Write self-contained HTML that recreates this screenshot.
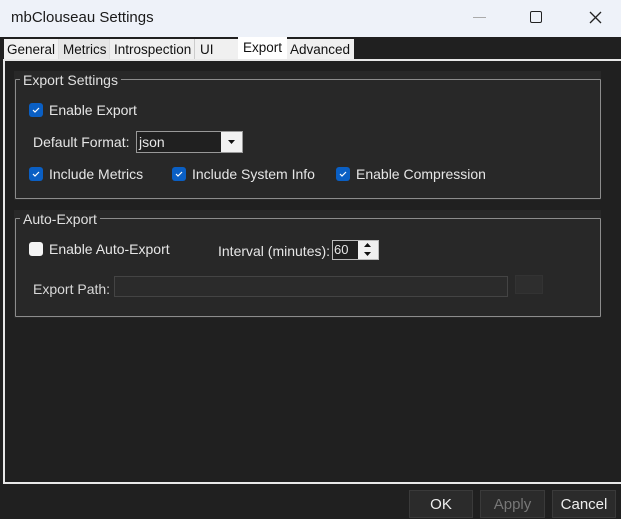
<!DOCTYPE html>
<html><head><style>
*{margin:0;padding:0;box-sizing:border-box}
body{width:621px;height:518px;background:#202020;font-family:"Liberation Sans",sans-serif;font-size:14px;color:#e6e6e6;position:relative;overflow:hidden}
.a{position:absolute}
.t{white-space:nowrap}
.cb{position:absolute;width:14px;height:14px;background:#0a5fc4;border-radius:3px}
.cb svg{position:absolute;left:2px;top:2px}
.gb{position:absolute;border:1px solid #8c8c8c;border-radius:1px}
.leg{position:absolute;background:#282828;padding:0 3px;color:#e0e0e0}
.btn{position:absolute;top:490px;height:28px;background:#2b2b2b;border:1px solid #3a3a3a;text-align:center;line-height:28px;font-size:15px}
</style></head><body>
<div class="a" style="left:0;top:0;width:621px;height:37px;background:#eef2f9"></div>
<div class="a t" style="left:11px;top:9px;color:#1a1a1a;font-size:15px">mbClouseau Settings</div>
<div class="a" style="left:473px;top:17px;width:13px;height:1px;background:#aaa"></div>
<div class="a" style="left:530px;top:11px;width:12px;height:12px;border:1.5px solid #222;border-radius:2px"></div>
<svg class="a" style="left:589px;top:11px" width="13" height="13"><path d="M1 1L12 12M12 1L1 12" stroke="#222" stroke-width="1.3"/></svg>
<!-- tabs -->
<div class="a" style="left:4px;top:39px;width:350px;height:20px;background:#f0f0f0"></div>
<div class="a t" style="left:7px;top:42px;color:#111;font-size:13.5px">General</div>
<div class="a" style="left:58px;top:39px;width:52px;height:20px;background:#e6e6e6;border-left:1px solid #ddd;border-right:1px solid #ddd"></div>
<div class="a t" style="left:63px;top:42px;color:#111;font-size:13.5px">Metrics</div>
<div class="a t" style="left:114px;top:42px;color:#111;font-size:13.5px">Introspection</div>
<div class="a" style="left:194px;top:39px;width:1px;height:20px;background:#ccc"></div>
<div class="a t" style="left:200px;top:42px;color:#111;font-size:13.5px">UI</div>
<div class="a" style="left:238px;top:37px;width:49px;height:24px;background:#fff"></div>
<div class="a t" style="left:243px;top:40px;color:#111;font-size:13.5px">Export</div>
<div class="a t" style="left:290px;top:42px;color:#111;font-size:13.5px">Advanced</div>
<!-- panel border -->
<div class="a" style="left:3px;top:59px;width:620px;height:425px;border:2px solid #e8e8e8;border-right:none"></div>
<div class="a" style="left:5px;top:61px;width:616px;height:421px;background:#202020"></div>
<!-- group 1 -->
<div class="a" style="left:14px;top:71px;width:587px;height:129px;background:#282828"></div>
<div class="gb" style="left:15px;top:79px;width:586px;height:120px"></div>
<div class="leg t" style="left:20px;top:72px">Export Settings</div>
<div class="cb" style="left:29px;top:103px"><svg width="10" height="10"><path d="M2 5L4 7L8 3" stroke="#fff" stroke-width="1.2" fill="none"/></svg></div>
<div class="a t" style="left:49px;top:102px">Enable Export</div>
<div class="a t" style="left:33px;top:134px">Default Format:</div>
<div class="a" style="left:136px;top:131px;width:107px;height:22px;background:#f2f2f2;border:1px solid #999"></div>
<div class="a" style="left:137px;top:132px;width:84px;height:20px;background:#202020"></div>
<div class="a t" style="left:139px;top:134px">json</div>
<svg class="a" style="left:228px;top:140px" width="7" height="5"><path d="M0 0H7L3.5 4Z" fill="#111"/></svg>
<div class="cb" style="left:29px;top:167px"><svg width="10" height="10"><path d="M2 5L4 7L8 3" stroke="#fff" stroke-width="1.2" fill="none"/></svg></div>
<div class="a t" style="left:49px;top:166px">Include Metrics</div>
<div class="cb" style="left:172px;top:167px"><svg width="10" height="10"><path d="M2 5L4 7L8 3" stroke="#fff" stroke-width="1.2" fill="none"/></svg></div>
<div class="a t" style="left:192px;top:166px">Include System Info</div>
<div class="cb" style="left:336px;top:167px"><svg width="10" height="10"><path d="M2 5L4 7L8 3" stroke="#fff" stroke-width="1.2" fill="none"/></svg></div>
<div class="a t" style="left:356px;top:166px">Enable Compression</div>
<!-- group 2 -->
<div class="a" style="left:14px;top:210px;width:587px;height:108px;background:#282828"></div>
<div class="gb" style="left:15px;top:218px;width:586px;height:99px"></div>
<div class="leg t" style="left:20px;top:211px">Auto-Export</div>
<div class="a" style="left:29px;top:242px;width:14px;height:14px;background:#f4f4f4;border-radius:3px"></div>
<div class="a t" style="left:49px;top:241px">Enable Auto-Export</div>
<div class="a t" style="left:218px;top:243px">Interval (minutes):</div>
<div class="a" style="left:332px;top:240px;width:47px;height:20px;border:1px solid #bbb;background:#202020"></div>
<div class="a t" style="left:334px;top:242px;font-size:13px">60</div>
<div class="a" style="left:358px;top:241px;width:20px;height:18px;background:#f0f0f0"></div>
<svg class="a" style="left:364px;top:243px" width="8" height="14"><path d="M0 4H7L3.5 0Z M0 9H7L3.5 13Z" fill="#111"/></svg>
<div class="a t" style="left:33px;top:281px;color:#d8d8d8">Export Path:</div>
<div class="a" style="left:114px;top:276px;width:394px;height:21px;background:#2b2b2b;border:1px solid #444"></div>
<div class="a" style="left:515px;top:275px;width:28px;height:19px;background:#2e2e2e;border:1px solid #333"></div>
<!-- buttons -->
<div class="btn" style="left:409px;width:64px;color:#eee">OK</div>
<div class="btn" style="left:480px;width:65px;color:#777">Apply</div>
<div class="btn" style="left:552px;width:64px;color:#eee">Cancel</div>
</body></html>
